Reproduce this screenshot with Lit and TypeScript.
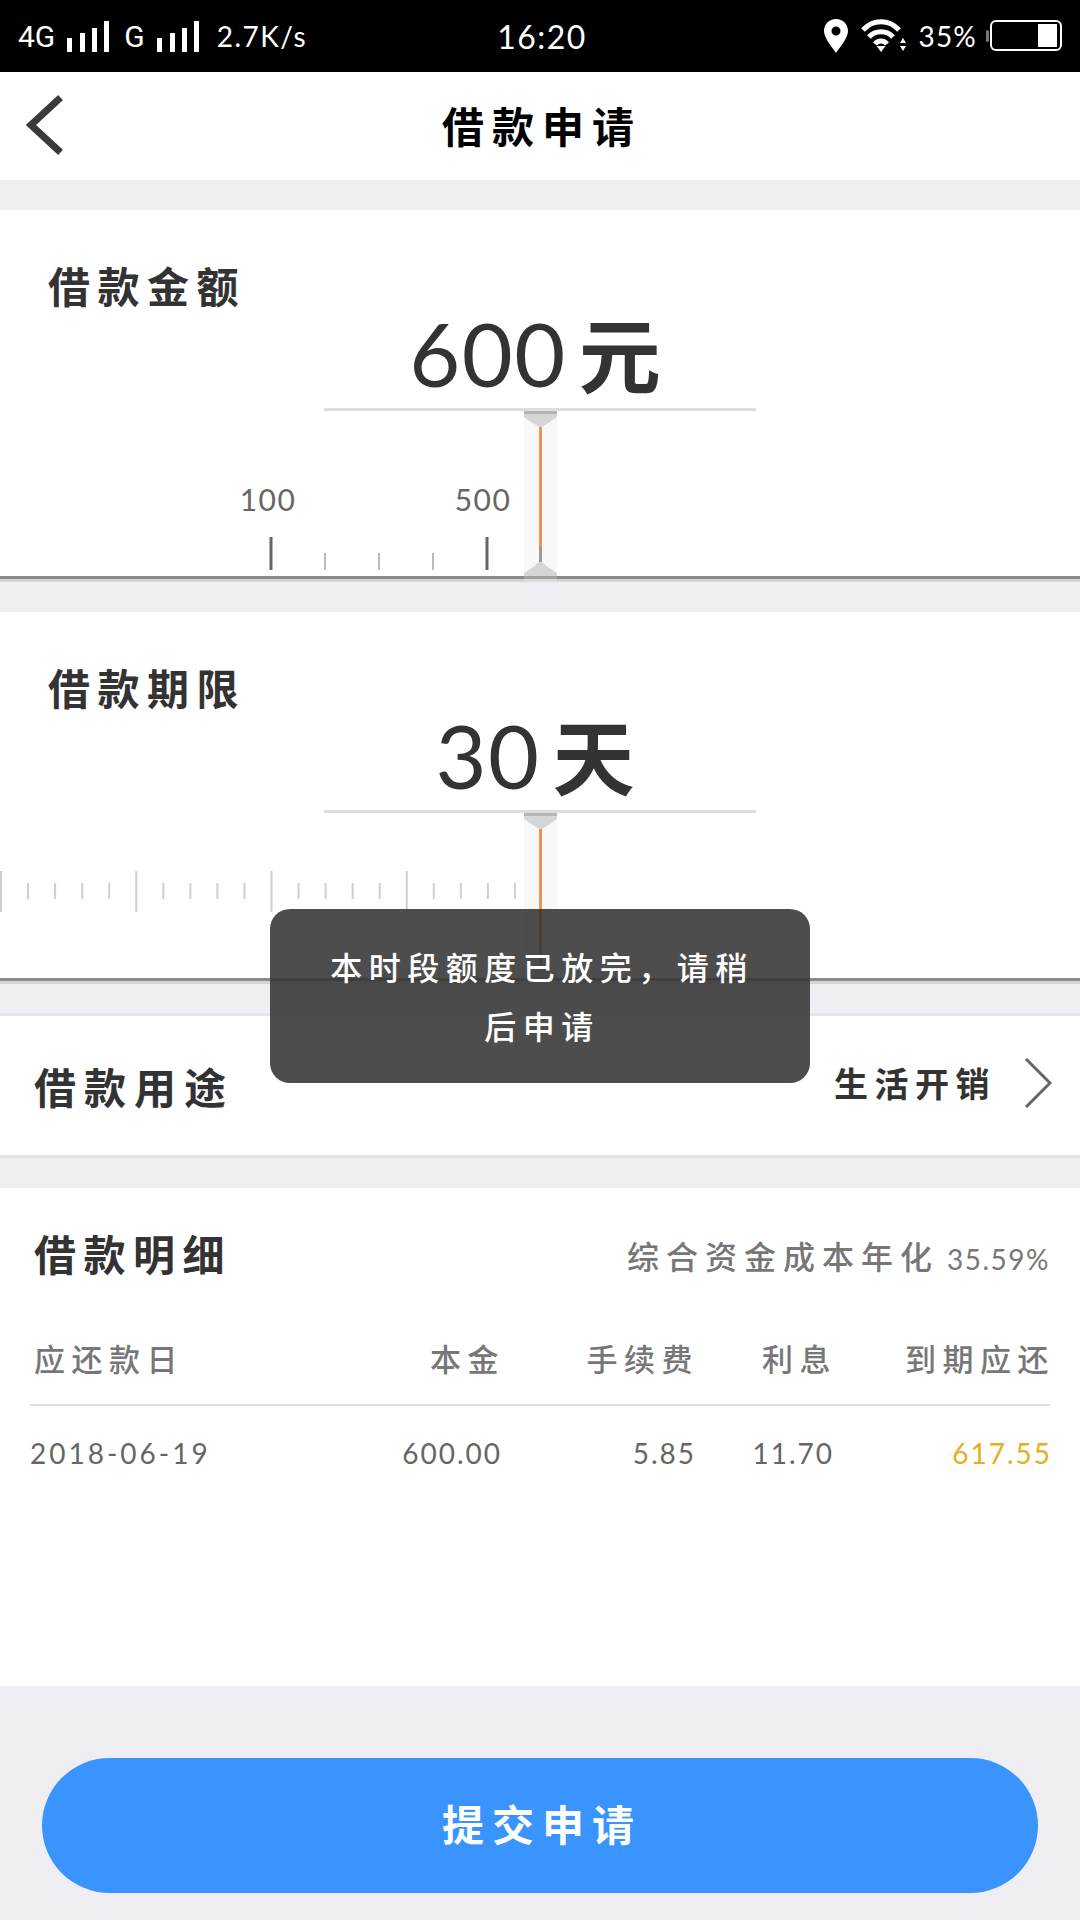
import { LitElement, html, css, svg } from "lit";
import { customElement } from "lit/decorators.js";

const range = (n: number) => Array.from({ length: n }, (_, i) => i);

@customElement("loan-thumb")
class LoanThumb extends LitElement {
  static styles = css`
    :host { position: absolute; left: 524px; top: 0; width: 33px; height: 171px; display: block; }
    svg { display: block; }
  `;
  render() {
    return html`<svg width="33" height="171" viewBox="0 0 33 171">
      <rect width="33" height="171" fill="#f8f8f8"/>
      <rect x="15" y="14" width="3" height="136" fill="#ef9350"/>
      <rect x="15" y="136" width="3" height="20" fill="#9a9a9a"/>
      <path d="M0 0H33V6C28 10 22 13 18 16H15C11 13 5 10 0 6Z" fill="#d6d6d6"/>
      <rect width="33" height="3" fill="#b4b4b4"/>
      <path d="M0 162C5 159 11 155 15 151H18C22 155 28 159 33 162V166H0Z" fill="#d6d6d6"/>
      <rect y="165" width="33" height="3" fill="#a0a0a0"/>
      <rect y="168" width="33" height="3" fill="#dcdcdc"/>
    </svg>`;
  }
}

@customElement("app-root")
class AppRoot extends LitElement {
  static styles = css`
    :host {
      display: block; position: relative; width: 1080px; height: 1920px; overflow: hidden;
      background: #eeeef3; color: #333;
      font-family: "Noto Sans CJK SC", "Noto Sans", sans-serif;
    }
    .status {
      height: 72px; background: #000; color: #fff; box-sizing: border-box; padding: 0 18px 0 18px;
      display: grid; grid-template-columns: 1fr auto 1fr; align-items: center;
      font-family: Roboto, sans-serif;
    }
    .st-left, .st-right { display: flex; align-items: center; }
    .st-right { justify-content: flex-end; }
    .st-left { font-size: 30px; }
    .st-left svg { margin: 0 15px 0 12px; }
    .st-left svg.last { margin-right: 18px; }
    .speed { font-size: 28px; letter-spacing: 1.5px; font-family: Lato, sans-serif; }
    .clock { font-size: 32px; letter-spacing: 1.5px; padding-left: 4px; font-family: Lato, sans-serif; }
    .pct { font-size: 28px; margin: 0 9px 0 11px; letter-spacing: 1.2px; font-family: Lato, sans-serif; }
    .pin { margin-right: 13px; }

    .nav {
      height: 108px; box-sizing: border-box; padding: 0 0 4px 4px; background: #fff; display: flex; align-items: center; justify-content: center;
      position: relative; font-size: 42px; font-weight: 700; letter-spacing: 8px; color: #000;
    }
    .nav svg { position: absolute; left: 26px; top: 22px; }

    .card { background: #fff; margin-top: 30px; }
    .label {
      height: 50px; line-height: 50px; padding: 50px 0 0 48px; font-size: 42px; font-weight: 700;
      letter-spacing: 7.5px; color: #333;
    }
    .value {
      height: 98px; display: flex; justify-content: center; align-items: baseline; color: #333;
      box-sizing: border-box; padding: 0 10px 0 0;
    }
    .value .num { font-family: Lato, sans-serif; font-size: 88px; line-height: 84px; letter-spacing: 1.5px; }
    .value .unit { font-size: 82px; line-height: 84px; font-weight: 700; margin-left: 12px; }
    .under { width: 432px; height: 3px; background: #dedede; margin: 0 auto; }
    .ruler { position: relative; height: 165px; }
    .ruler svg.ticks { display: block; }
    .ruler text { font-family: Lato, sans-serif; font-size: 30px; fill: #666; letter-spacing: 1.5px; text-anchor: middle; }
    .base { height: 3px; background: #8a8a8a; }
    .base2 { height: 3px; background: #d4d4d8; }
    .gap-band { height: 29px; background: #eeeef3; }

    .row {
      height: 139px; background: #fff; border-bottom: 3px solid #e3e3e8;
      display: flex; align-items: center; justify-content: space-between; padding: 0 28px 0 34px;
      border-top: 3px solid #e6e6ea;
    }
    .row .name { font-size: 42px; font-weight: 700; letter-spacing: 8px; }
    .row .pick { display: flex; align-items: center; gap: 28px; font-size: 34px; font-weight: 700; letter-spacing: 6.5px; padding-bottom: 6px; }

    .detail { background: #fff; margin-top: 30px; height: 498px; box-sizing: border-box; padding: 35px 30px 0; }
    .d-head { display: flex; justify-content: space-between; align-items: center; height: 58px; }
    .d-title { font-size: 42px; font-weight: 700; letter-spacing: 7.5px; padding-left: 4px; }
    .d-rate { font-size: 32px; font-weight: 500; letter-spacing: 7px; color: #777; display: flex; align-items: center; margin-top: 5px; }
    .d-rate span { font-family: Lato, sans-serif; font-size: 28px; font-weight: 400; letter-spacing: 1.5px; margin-left: 8px; margin-top: 9px; }
    .table { display: grid; grid-template-columns: 300px 170px 194px 138px 218px; margin-top: 30px; }
    .th { height: 93px; border-bottom: 2px solid #dcdcdc; display: flex; align-items: center; justify-content: flex-end;
      font-size: 31px; font-weight: 500; letter-spacing: 6.5px; color: #777; }
    .th span { margin-right: -5px; }
    .td { height: 94px; display: flex; align-items: center; justify-content: flex-end;
      font-family: Lato, sans-serif; font-size: 28px; letter-spacing: 2px; color: #666; }
    .td span { margin-right: -2px; }
    .th.first, .td.first { justify-content: flex-start; }
    .th.first { padding-left: 4px; }
    .td.first { letter-spacing: 3px; }
    .td.due { color: #e8ad21; }

    .footer { padding: 72px 42px 0; }
    .submit {
      height: 135px; box-sizing: border-box; padding: 0 0 6px 4px; border-radius: 68px; background: #3a94ff; color: #fff; display: flex; align-items: center;
      justify-content: center; font-size: 42px; font-weight: 700; letter-spacing: 8px;
    }

    .toast {
      position: absolute; left: 270px; top: 909px; width: 540px; height: 174px; box-sizing: border-box;
      padding: 28px 52px 28px 56px; border-radius: 20px; background: rgba(51, 51, 51, 0.87); color: #fff;
      text-align: center; font-size: 32px; font-weight: 500; letter-spacing: 6.5px; line-height: 59px;
    }
  `;

  private rulerOne() {
    return html`<svg class="ticks" width="1080" height="165" viewBox="0 0 1080 165">
      <text x="268" y="100">100</text>
      <text x="483" y="100">500</text>
      ${[271, 487].map((x) => svg`<rect x=${x - 1.5} y="126" width="3" height="33" fill="#666"/>`)}
      ${[325, 379, 433].map((x) => svg`<rect x=${x - 1} y="142" width="2" height="17" fill="#bbb"/>`)}
    </svg>`;
  }

  private rulerTwo() {
    const step = 27.05;
    return html`<svg class="ticks" width="1080" height="165" viewBox="0 0 1080 165">
      ${range(20).map((i) => {
        const major = i % 5 === 0;
        const x = i * step;
        return svg`<rect x=${x} y=${major ? 58 : 70} width="2" height=${major ? 41 : 16} fill="#cfcfcf"/>`;
      })}
    </svg>`;
  }

  render() {
    return html`
      <div class="status">
        <div class="st-left">
          <span>4G</span>
          <svg width="42" height="31" viewBox="0 0 42 31" fill="#fff"><rect x="0" y="17" width="5" height="14"/><rect x="13" y="12" width="5" height="19"/><rect x="25" y="7" width="5" height="24"/><rect x="37" y="0" width="5" height="31"/></svg>
          <span>G</span>
          <svg class="last" width="42" height="31" viewBox="0 0 42 31" fill="#fff"><rect x="0" y="17" width="5" height="14"/><rect x="13" y="12" width="5" height="19"/><rect x="25" y="7" width="5" height="24"/><rect x="37" y="0" width="5" height="31"/></svg>
          <span class="speed">2.7K/s</span>
        </div>
        <div class="clock">16:20</div>
        <div class="st-right">
          <svg class="pin" width="24" height="34" viewBox="0 0 24 34"><path fill="#fff" fill-rule="evenodd" d="M12 0C5 0 0 5 0 12C0 19 8 28 12 34C16 28 24 19 24 12C24 5 19 0 12 0ZM12 7.500A4.500 4.500 0 1 1 12 16.500A4.500 4.500 0 1 1 12 7.500Z"/></svg>
          <svg width="46" height="34" viewBox="0 0 46 34" fill="none" stroke="#fff" stroke-width="5">
            <path d="M2 11C12 0 28 0 38 11"/><path d="M8 18C14 11 26 11 32 18"/><path d="M14 25C17 21 23 21 26 25"/>
            <path d="M15.500 27L20 33L24.500 27Z" fill="#fff" stroke="none"/>
            <path d="M42 19L39 24H45Z M39 27H45L42 32Z" fill="#fff" stroke="none"/>
          </svg>
          <span class="pct">35%</span>
          <svg width="76" height="32" viewBox="0 0 76 32"><rect x="0" y="10" width="3" height="12" rx="1.500" fill="#777"/><rect x="5" y="1" width="70" height="29" rx="5" fill="none" stroke="#fff" stroke-width="2"/><rect x="52" y="4" width="19" height="23" fill="#fff"/></svg>
        </div>
      </div>

      <div class="nav">
        <svg width="44" height="64" viewBox="0 0 44 64" fill="none" stroke="#3a3a3a" stroke-width="7" stroke-linecap="square"><path d="M32 6L5 31L32 56"/></svg>
        借款申请
      </div>

      <div class="card">
        <div class="label">借款金额</div>
        <div class="value"><span class="num">600</span><span class="unit">元</span></div>
        <div class="under"></div>
        <div class="ruler">${this.rulerOne()}<loan-thumb></loan-thumb></div>
        <div class="base"></div><div class="base2"></div>
      </div>

      <div class="card">
        <div class="label">借款期限</div>
        <div class="value"><span class="num">30</span><span class="unit">天</span></div>
        <div class="under"></div>
        <div class="ruler">${this.rulerTwo()}<loan-thumb></loan-thumb></div>
        <div class="base"></div><div class="base2"></div>
      </div>

      <div class="gap-band"></div>
      <div class="row">
        <div class="name">借款用途</div>
        <div class="pick">生活开销
          <svg width="28" height="50" viewBox="0 0 28 50" fill="none" stroke="#666" stroke-width="3"><path d="M2 1L26 25L2 49"/></svg>
        </div>
      </div>

      <div class="detail">
        <div class="d-head">
          <div class="d-title">借款明细</div>
          <div class="d-rate">综合资金成本年化<span>35.59%</span></div>
        </div>
        <div class="table">
          <div class="th first">应还款日</div><div class="th"><span>本金</span></div><div class="th"><span>手续费</span></div><div class="th"><span>利息</span></div><div class="th"><span>到期应还</span></div>
          <div class="td first">2018-06-19</div><div class="td"><span>600.00</span></div><div class="td"><span>5.85</span></div><div class="td"><span>11.70</span></div><div class="td due"><span>617.55</span></div>
        </div>
      </div>

      <div class="footer"><div class="submit">提交申请</div></div>

      <div class="toast">本时段额度已放完，请稍后申请</div>
    `;
  }
}
